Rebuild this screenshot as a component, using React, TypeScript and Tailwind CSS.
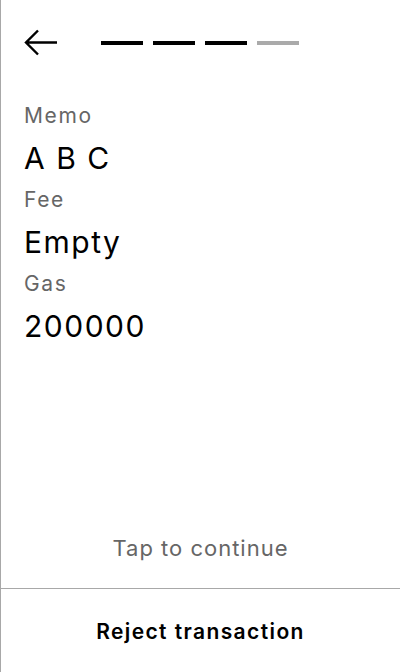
import React from 'react';

const STEPS = [true, true, true, false];

const fields = [
  { label: 'Memo', value: 'A B C' },
  { label: 'Fee', value: 'Empty' },
  { label: 'Gas', value: '200000' },
];

const BackArrow: React.FC = () => (
  <svg width="34" height="27" viewBox="0 0 34 27" fill="none">
    <path d="M33 13.5H2M14 1.5L2 13.5l12 12" stroke="#000" strokeWidth="2.4" />
  </svg>
);

export default function App() {
  return (
    <div
      className="h-[672px] w-[400px] bg-white border-l border-[#a8a8a8] flex flex-col text-black"
      style={{ fontFamily: 'Inter, "Noto Sans", sans-serif' }}
    >
      {/* header */}
      <div className="flex items-center h-[86px] pl-[23px] pb-[1px]">
        <BackArrow />
        <div className="flex gap-[10px] ml-[43px]">
          {STEPS.map((done, i) => (
            <div key={i} className={`w-[42px] h-[4px] ${done ? 'bg-black' : 'bg-[#aaaaaa]'}`} />
          ))}
        </div>
      </div>

      {/* fields */}
      <div className="flex flex-col pl-[23px] mt-[14px]">
        {fields.map((f) => (
          <div key={f.label} className="flex flex-col">
            <div className="h-[32px] leading-[32px] text-[21px] tracking-[1.6px] text-[#666666]">{f.label}</div>
            <div className="h-[52px] leading-[52px] text-[30px] tracking-[1.5px]">{f.value}</div>
          </div>
        ))}
      </div>

      <div className="flex-1" />

      {/* footer */}
      <div className="h-[48px] flex items-center justify-center text-[22px] tracking-[1px] text-[#666666] mb-[16px]">
        Tap to continue
      </div>
      <div className="border-t border-[#a8a8a8] h-[84px] pt-[3px] flex items-center justify-center text-[21px] tracking-[1.4px] font-semibold">
        Reject transaction
      </div>
    </div>
  );
}
